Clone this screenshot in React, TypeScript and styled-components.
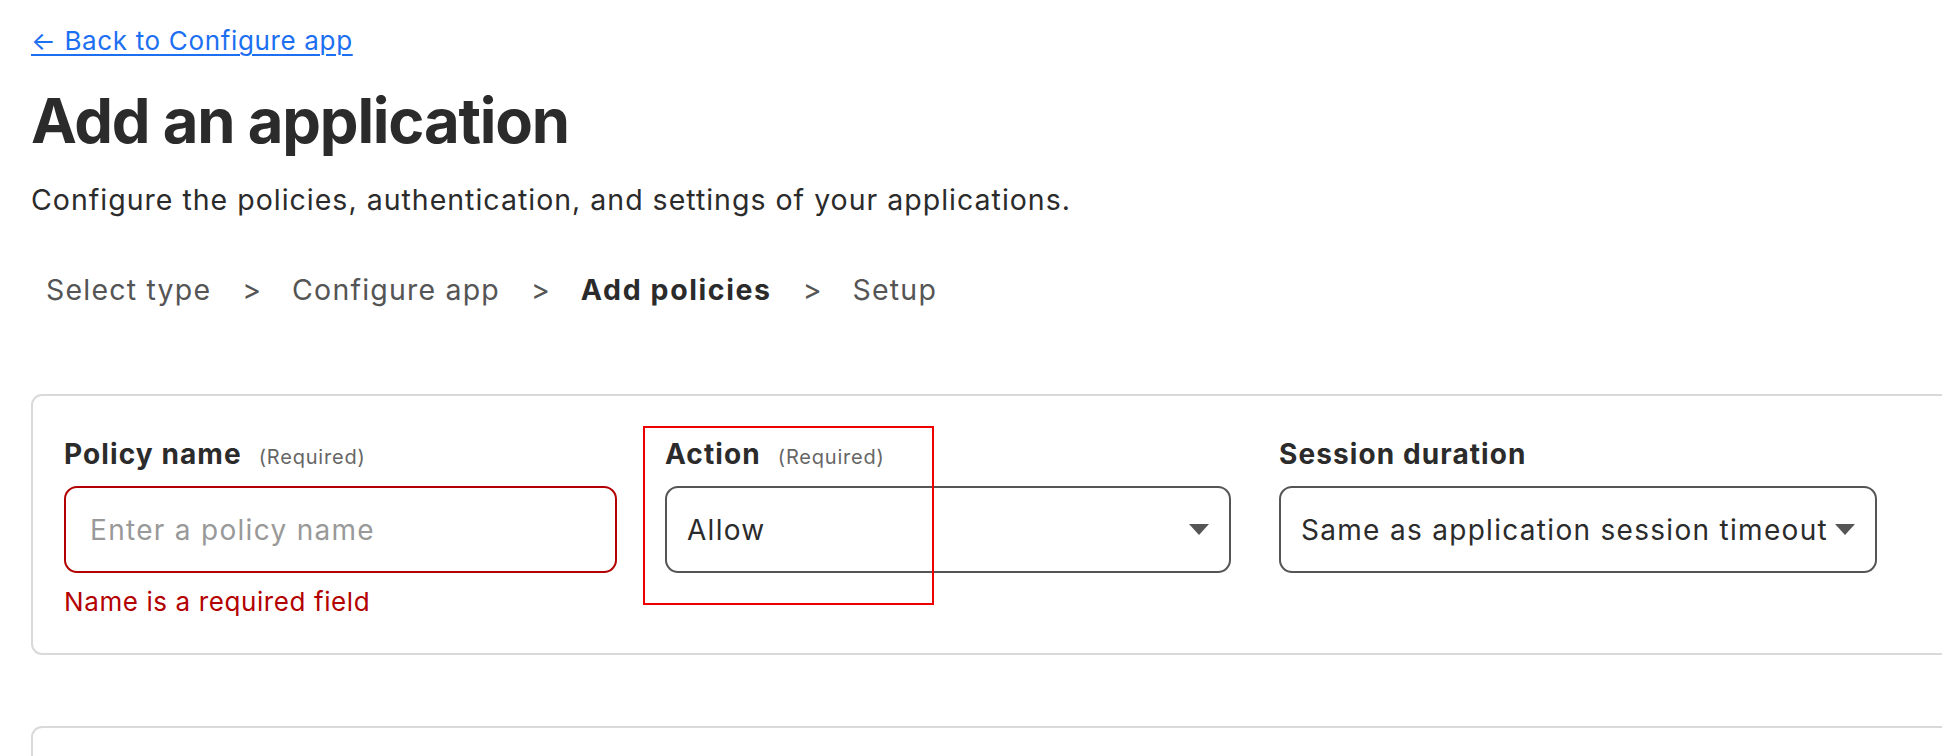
import React from "react";
import styled, { createGlobalStyle } from "styled-components";

const GlobalStyle = createGlobalStyle`
  body {
    margin: 0;
    background: #ffffff;
    font-family: Inter, "Noto Sans", "Liberation Sans", sans-serif;
    color: #2b2b2b;
    overflow: hidden;
  }
`;

const Page = styled.main`
  padding: 21px 0 0 31px;
  display: flex;
  flex-direction: column;
  align-items: flex-start;
`;

const BackLink = styled.a`
  font-size: 26px;
  line-height: 40px;
  letter-spacing: 0.65px;
  color: #1d6ff2;
  text-decoration: underline;
  text-underline-offset: 4px;
  text-decoration-thickness: 2px;
  cursor: pointer;
`;

const Title = styled.h1`
  margin: 24px 0 0;
  font-size: 61.5px;
  line-height: 72px;
  font-weight: 700;
  letter-spacing: -1.2px;
  color: #2b2b2b;
`;

const Subtitle = styled.p`
  margin: 25px 0 0;
  font-size: 28.5px;
  line-height: 36px;
  letter-spacing: 1px;
  color: #2b2b2b;
`;

const Steps = styled.nav`
  margin: 54px 0 0 15px;
  display: flex;
  align-items: center;
  gap: 31px;
  font-size: 28.5px;
  line-height: 36px;
`;

const Step = styled.span<{ active?: boolean }>`
  color: ${({ active }) => (active ? "#2b2b2b" : "#555555")};
  font-weight: ${({ active }) => (active ? 700 : 400)};
  letter-spacing: ${({ active }) => (active ? "1.6px" : "1.2px")};
`;

const Sep = styled.span`
  color: #555555;
  font-size: 28.5px;
`;

const Card = styled.section<{ tall?: boolean }>`
  box-sizing: border-box;
  width: 2100px;
  height: ${({ tall }) => (tall ? "200px" : "261px")};
  margin-top: ${({ tall }) => (tall ? "71px" : "86px")};
  border: 2px solid #d9d9d9;
  border-radius: 11px;
  padding: 38px 0 0 31px;
  display: flex;
  gap: 48px;
`;

const Field = styled.div<{ w: number }>`
  position: relative;
  width: ${({ w }) => w}px;
  display: flex;
  flex-direction: column;
`;

const LabelRow = styled.div`
  display: flex;
  align-items: baseline;
  gap: 17px;
  height: 40px;
  margin-bottom: 12px;
`;

const Label = styled.label`
  font-size: 28px;
  line-height: 40px;
  font-weight: 700;
  letter-spacing: 1.1px;
  color: #2b2b2b;
`;

const Hint = styled.span`
  font-size: 20px;
  letter-spacing: 0.8px;
  color: #666666;
`;

const TextInput = styled.input<{ invalid?: boolean }>`
  box-sizing: border-box;
  width: 100%;
  height: 87px;
  border: 2px solid ${({ invalid }) => (invalid ? "#b30000" : "#555555")};
  border-radius: 13px;
  padding: 0 24px;
  font-family: inherit;
  font-size: 28px;
  letter-spacing: 1.3px;
  color: #2b2b2b;
  outline: none;
  &::placeholder {
    color: #999999;
  }
`;

const SelectBox = styled.div`
  box-sizing: border-box;
  width: 100%;
  height: 87px;
  border: 2px solid #555555;
  border-radius: 13px;
  padding: 0 20px 0 20px;
  display: flex;
  align-items: center;
  justify-content: space-between;
  font-size: 28px;
  letter-spacing: 1.3px;
  color: #2b2b2b;
`;

const Caret = styled.span`
  width: 0;
  height: 0;
  border-left: 10px solid transparent;
  border-right: 10px solid transparent;
  border-top: 11px solid #555555;
`;

const ErrorText = styled.div`
  margin-top: 12px;
  font-size: 26px;
  line-height: 34px;
  letter-spacing: 0.6px;
  color: #b30000;
`;

const Highlight = styled.div`
  position: absolute;
  left: -22px;
  top: -8px;
  width: 291px;
  height: 179px;
  box-sizing: border-box;
  border: 2px solid #ee0000;
  pointer-events: none;
`;

export default function App() {
  return (
    <>
      <GlobalStyle />
      <Page>
        <BackLink>← Back to Configure app</BackLink>
        <Title>Add an application</Title>
        <Subtitle>
          Configure the policies, authentication, and settings of your applications.
        </Subtitle>
        <Steps>
          <Step>Select type</Step>
          <Sep>&gt;</Sep>
          <Step>Configure app</Step>
          <Sep>&gt;</Sep>
          <Step active>Add policies</Step>
          <Sep>&gt;</Sep>
          <Step>Setup</Step>
        </Steps>
        <Card>
          <Field w={553}>
            <LabelRow>
              <Label>Policy name</Label>
              <Hint>(Required)</Hint>
            </LabelRow>
            <TextInput invalid placeholder="Enter a policy name" />
            <ErrorText>Name is a required field</ErrorText>
          </Field>
          <Field w={566}>
            <Highlight />
            <LabelRow>
              <Label>Action</Label>
              <Hint>(Required)</Hint>
            </LabelRow>
            <SelectBox>
              <span>Allow</span>
              <Caret />
            </SelectBox>
          </Field>
          <Field w={598}>
            <LabelRow>
              <Label>Session duration</Label>
            </LabelRow>
            <SelectBox>
              <span>Same as application session timeout</span>
              <Caret />
            </SelectBox>
          </Field>
        </Card>
        <Card tall />
      </Page>
    </>
  );
}
